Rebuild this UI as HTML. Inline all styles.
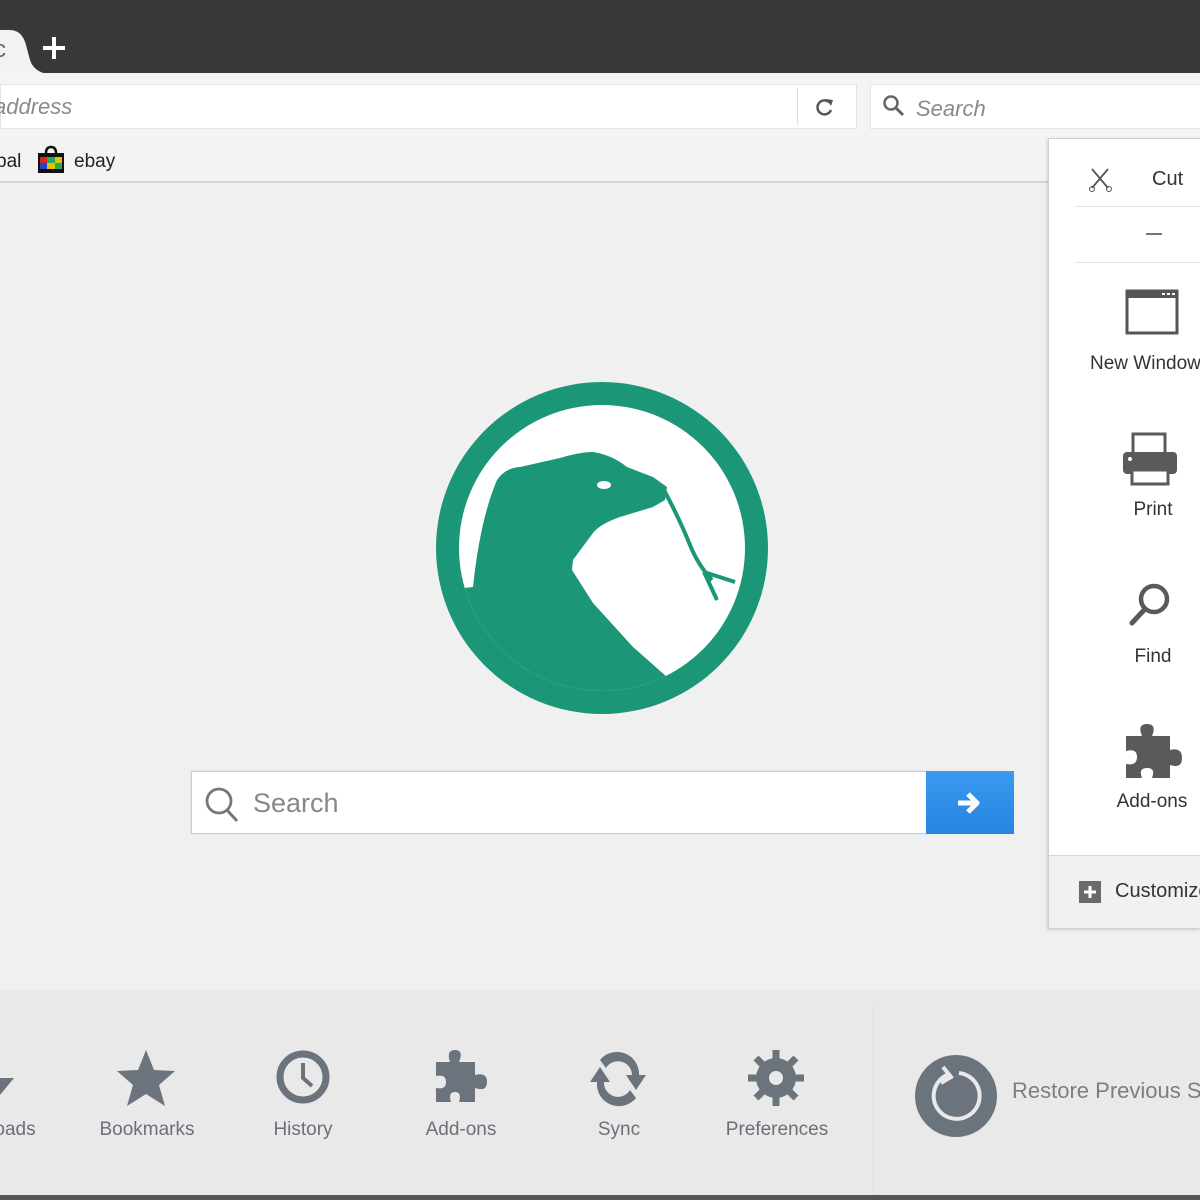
<!DOCTYPE html>
<html><head><meta charset="utf-8"><style>
*{margin:0;padding:0;box-sizing:border-box}
body{width:1200px;height:1200px;overflow:hidden;background:#f0f0f0;font-family:"Liberation Sans",sans-serif;position:relative}
.a{position:absolute}
.lbl{position:absolute;font-size:19px;color:#6b7078;transform:translateX(-50%);white-space:nowrap}
.ml{position:absolute;font-size:19px;color:#333;transform:translateX(-50%);white-space:nowrap}
.clip{position:absolute;overflow:hidden}
</style></head><body>
<div class="a" style="left:0;top:0;width:1200px;height:74px;background:#383838"></div>
<svg class="a" style="left:0;top:0" width="80" height="76"><path d="M0,30 L10,30 Q22,30 26,45 L30,60 Q34,72 48,74 L0,76Z" fill="#f2f2f2"/><text x="-6" y="57" font-size="24" fill="#666" font-family="Liberation Sans">c</text></svg>
<div class="a" style="left:43px;top:46px;width:22px;height:4px;background:#fff"></div>
<div class="a" style="left:52px;top:37px;width:4px;height:22px;background:#fff"></div>
<div class="a" style="left:0;top:73px;width:1200px;height:63px;background:#f4f4f4"></div>
<div class="a" style="left:0;top:84px;width:857px;height:45px;background:#fff;border:1px solid #e4e4e4"></div>
<div class="a" style="top:94px;font-size:22px;font-style:italic;color:#8a8a8a;left:-6px">address</div>
<div class="a" style="left:797px;top:88px;width:1px;height:37px;background:#ddd"></div>
<svg class="a" style="left:814px;top:96px" width="24" height="24"><path d="M17,14 A7,7 0 1 1 15,6" fill="none" stroke="#555" stroke-width="2.5"/><path d="M12,3 L19,4 L17,10Z" fill="#555"/></svg>
<div class="a" style="left:870px;top:84px;width:330px;height:45px;background:#fff;border:1px solid #e4e4e4;border-right:none"></div>
<svg class="a" style="left:881px;top:93px" width="26" height="26"><circle cx="10" cy="10" r="6.5" fill="none" stroke="#666" stroke-width="2.5"/><path d="M15,15 L22,22" stroke="#666" stroke-width="3"/></svg>
<div class="a" style="left:916px;top:96px;font-size:22px;font-style:italic;color:#8a8a8a">Search</div>
<div class="a" style="left:0;top:136px;width:1200px;height:47px;background:#f3f3f3;border-bottom:2px solid #d6d6d6"></div>
<div class="a" style="left:-4px;top:151px;font-size:19px;color:#222">pal</div>
<svg class="a" style="left:37px;top:145px" width="30" height="30"><path d="M9,8 Q9,2 14,2 Q19,2 19,8" fill="none" stroke="#111" stroke-width="2.5"/><rect x="1" y="8" width="26" height="20" fill="#111"/><rect x="3" y="12" width="7" height="6" fill="#d22"/><rect x="10" y="12" width="8" height="6" fill="#2a5"/><rect x="18" y="12" width="7" height="6" fill="#e4c000"/><rect x="3" y="18" width="7" height="6" fill="#24c"/><rect x="10" y="18" width="8" height="6" fill="#e4c000"/><rect x="18" y="18" width="7" height="6" fill="#2a5"/></svg>
<div class="a" style="left:74px;top:151px;font-size:19px;color:#222">ebay</div>
<svg class="a" style="left:0;top:0" width="1200" height="1200">
<defs><clipPath id="c"><circle cx="602" cy="548" r="143"/></clipPath></defs>
<circle cx="602" cy="548" r="166" fill="#1b9777"/>
<circle cx="602" cy="548" r="143" fill="#fff"/>
<path clip-path="url(#c)" fill="#1b9777" d="M430,760 L430,592 L473,587 Q480,520 497,480 Q505,468 520,467 L560,458 Q580,452 593,452 Q612,455 627,467 L653,477 L667,487 L665,500 L653,507 L620,517 Q600,524 593,533 L573,560 L572,570 L593,603 L633,647 L667,677 L700,720 L700,760Z"/>
<path d="M664,490 Q680,520 690,545 Q698,565 712,580 M704,572 L735,582 M704,572 L717,600" fill="none" stroke="#1b9777" stroke-width="4"/>
<ellipse cx="604" cy="485" rx="7" ry="4" fill="#fff"/>
</svg>
<div class="a" style="left:191px;top:771px;width:737px;height:63px;background:#fff;border:1px solid #b8cfe4;box-shadow:0 0 2px #cfe0ef"></div>
<svg class="a" style="left:202px;top:785px" width="40" height="40"><circle cx="17" cy="16" r="12" fill="none" stroke="#777" stroke-width="2.8"/><path d="M25,25 L35,36" stroke="#777" stroke-width="3"/></svg>
<div class="a" style="left:253px;top:788px;font-size:27px;color:#888">Search</div>
<div class="a" style="left:926px;top:771px;width:88px;height:63px;background:linear-gradient(#3a9af0,#2585e0)"></div>
<svg class="a" style="left:953px;top:788px" width="32" height="30"><path d="M5,15 H24 M15,6 L24,15 L15,24" fill="none" stroke="#fff" stroke-width="5" stroke-linejoin="round"/></svg>
<div class="a" style="left:0;top:990px;width:1200px;height:206px;background:#e9e9e9"></div>
<div class="a" style="left:873px;top:1005px;width:1px;height:190px;background:#dcdcdc"></div>
<div class="a" style="left:0;top:1195px;width:1200px;height:5px;background:#555"></div>
<svg class="a" style="left:0;top:1040px" width="880" height="80" fill="#6b737c">
<path d="M0,38 L14,38 L0,55Z"/>
<path d="M146,10 L154,30 L175,31 L159,45 L165,66 L146,54 L127,66 L133,45 L117,31 L138,30Z"/>
<circle cx="303" cy="37" r="23" fill="none" stroke="#6b737c" stroke-width="7"/><path d="M303,23 V38 L312,46" fill="none" stroke="#6b737c" stroke-width="4"/>
<path d="M436,22 H450 Q446,10 455,10 Q464,10 459,22 H475 V35 Q487,32 487,42 Q487,52 475,48 V62 H459 Q462,52 455,52 Q448,52 451,62 H436 V48 Q446,50 446,42 Q446,34 436,36Z"/>
<path d="M600,20 A22,22 0 0 1 639,35 L646,35 L636,50 L626,35 L632,35 A14,14 0 0 0 606,28Z"/><path d="M636,58 A22,22 0 0 1 597,42 L590,42 L600,27 L610,42 L604,42 A14,14 0 0 0 630,50Z"/>
<circle cx="776" cy="38" r="20"/><g stroke="#6b737c" stroke-width="7"><path d="M776,10 V66 M748,38 H804 M756,18 L796,58 M796,18 L756,58"/></g><circle cx="776" cy="38" r="7" fill="#e9e9e9"/>
</svg>
<div class="lbl" style="left:15px;top:1119px">oads</div>
<div class="lbl" style="left:147px;top:1119px">Bookmarks</div>
<div class="lbl" style="left:303px;top:1119px">History</div>
<div class="lbl" style="left:461px;top:1119px">Add-ons</div>
<div class="lbl" style="left:619px;top:1119px">Sync</div>
<div class="lbl" style="left:777px;top:1119px">Preferences</div>
<svg class="a" style="left:913px;top:1053px" width="86" height="86"><circle cx="43" cy="43" r="41" fill="#6b737c"/><path d="M34,22 A23,23 0 1 0 46,20" fill="none" stroke="#e9e9e9" stroke-width="4"/><path d="M30,14 L38,24 L28,30" fill="none" stroke="#e9e9e9" stroke-width="4"/></svg>
<div class="clip" style="left:1012px;top:1078px;width:188px;height:32px"><div style="font-size:22px;color:#7a7f86;white-space:nowrap">Restore Previous Session</div></div>
<div class="a" style="left:1048px;top:138px;width:152px;height:791px;background:#fff;border:1px solid #d0d0d0;border-right:none;box-shadow:-1px 1px 3px rgba(0,0,0,.15)"></div>
<div class="a" style="left:1049px;top:855px;width:151px;height:73px;background:#f1f1f1;border-top:1px solid #d8d8d8"></div>
<svg class="a" style="left:1088px;top:166px" width="26" height="28"><path d="M4,3 L20,22 M20,3 L4,22" stroke="#555" stroke-width="1.8"/><circle cx="4" cy="23" r="2.5" fill="none" stroke="#555"/><circle cx="21" cy="23" r="2.5" fill="none" stroke="#555"/></svg>
<div class="a" style="left:1152px;top:168px;font-size:20px;color:#333">Cut</div>
<div class="a" style="left:1075px;top:206px;width:125px;height:1px;background:#e2e2e2"></div>
<div class="a" style="left:1146px;top:233px;width:16px;height:2px;background:#777"></div>
<div class="a" style="left:1075px;top:262px;width:125px;height:1px;background:#e2e2e2"></div>
<svg class="a" style="left:1124px;top:288px" width="56" height="48"><rect x="3" y="3" width="50" height="42" fill="none" stroke="#555" stroke-width="3"/><rect x="3" y="3" width="50" height="7" fill="#555"/><rect x="38" y="5" width="3" height="2" fill="#fff"/><rect x="43" y="5" width="3" height="2" fill="#fff"/><rect x="48" y="5" width="3" height="2" fill="#fff"/></svg>
<div class="clip" style="left:1060px;top:353px;width:140px;height:26px"><div style="position:absolute;left:30px;font-size:19px;color:#333;white-space:nowrap">New Window</div></div>
<svg class="a" style="left:1120px;top:432px" width="60" height="56" fill="#5a5a5a"><rect x="13" y="2" width="32" height="20" fill="none" stroke="#5a5a5a" stroke-width="3"/><rect x="3" y="20" width="54" height="22" rx="4"/><rect x="12" y="38" width="36" height="14" fill="#fff" stroke="#5a5a5a" stroke-width="3"/><circle cx="10" cy="27" r="2" fill="#fff"/></svg>
<div class="ml" style="left:1153px;top:499px">Print</div>
<svg class="a" style="left:1126px;top:580px" width="50" height="50"><circle cx="28" cy="19" r="13" fill="none" stroke="#5a5a5a" stroke-width="4.5"/><path d="M19,29 L6,43" stroke="#5a5a5a" stroke-width="5" stroke-linecap="round"/></svg>
<div class="ml" style="left:1153px;top:646px">Find</div>
<svg class="a" style="left:1124px;top:722px" width="60" height="60" fill="#5a5a5a"><path d="M2,14 H18 Q13,2 23,2 Q33,2 28,14 H46 V28 Q58,25 58,36 Q58,47 46,43 V56 H28 Q32,46 23,46 Q14,46 18,56 H2 V42 Q13,44 13,35 Q13,26 2,29Z"/></svg>
<div class="ml" style="left:1152px;top:791px">Add-ons</div>
<svg class="a" style="left:1078px;top:880px" width="24" height="24"><rect x="1" y="1" width="22" height="22" fill="#6a6a6a"/><path d="M12,6 V18 M6,12 H18" stroke="#fff" stroke-width="3"/></svg>
<div class="clip" style="left:1115px;top:880px;width:85px;height:28px"><div style="font-size:20px;color:#333;white-space:nowrap">Customize</div></div>
</body></html>
